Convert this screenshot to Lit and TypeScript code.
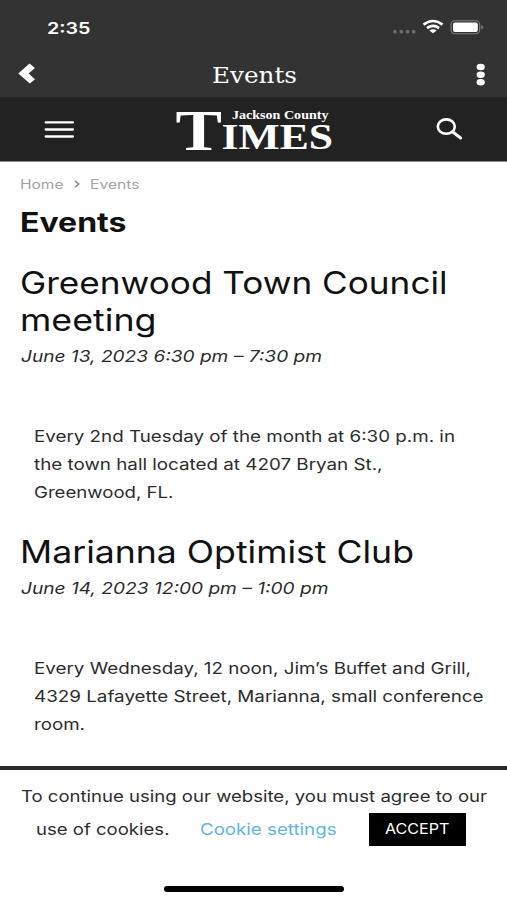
import { LitElement, html, css, svg } from "lit";
import { customElement } from "lit/decorators.js";

/** One line of wide-set text: `width` is its advance, `base` its baseline inside `height`. */
const line = (cls: string, text: string, width: number, height: number, base: number) => html`
  <svg class="line" width=${width} height=${height}>
    ${svg`<text class=${cls} x="0" y=${base} textLength=${width} lengthAdjust="spacingAndGlyphs">${text}</text>`}
  </svg>`;

type Line = [string, number];
interface EventItem {
  title: Line[];
  date: Line;
  body: Line[];
}

const events: EventItem[] = [
  {
    title: [["Greenwood Town Council", 427.5], ["meeting", 136.5]],
    date: ["June 13, 2023 6:30 pm – 7:30 pm", 301],
    body: [
      ["Every 2nd Tuesday of the month at 6:30 p.m. in", 421],
      ["the town hall located at 4207 Bryan St.,", 348.5],
      ["Greenwood, FL.", 139.5],
    ],
  },
  {
    title: [["Marianna Optimist Club", 394]],
    date: ["June 14, 2023 12:00 pm – 1:00 pm", 307.5],
    body: [
      ["Every Wednesday, 12 noon, Jim’s Buffet and Grill,", 437],
      ["4329 Lafayette Street, Marianna, small conference", 449.5],
      ["room.", 51],
    ],
  },
];

@customElement("app-root")
export class AppRoot extends LitElement {
  static styles = css`
    :host {
      display: flex;
      flex-direction: column;
      height: 900px;
      background: #fff;
      overflow: hidden;
      font-family: Inter, "Liberation Sans", sans-serif;
    }
    svg { display: block; overflow: visible; flex: none; }
    text { font-family: Inter, "Liberation Sans", sans-serif; fill: #2c2c2c; }
    .status {
      height: 54px;
      background: #333;
      display: flex;
      justify-content: space-between;
      padding: 0 23px 0 46.5px;
      box-sizing: border-box;
    }
    .time { font-size: 16px; font-weight: 600; fill: #fff; }
    .title {
      height: 43px;
      background: #333;
      display: flex;
      justify-content: space-between;
      padding: 0 21px 0 18px;
      box-sizing: border-box;
    }
    .screen { font-family: "DejaVu Serif", serif; font-size: 22.5px; fill: #fff; }
    .name { margin-left: -4px; }
    .nav {
      height: 64px;
      background: #222;
      border-bottom: 1px solid #8a8a8a;
      display: flex;
      justify-content: space-between;
      padding: 0 44px;
    }
    .logo text { font-family: "Liberation Serif", serif; font-weight: 700; fill: #fff; }
    .logo .big { font-size: 56px; }
    .logo .mid { font-size: 36px; }
    .logo .small { font-size: 12.5px; }
    .content { flex: 1; padding-left: 20px; }
    .crumbs { display: flex; height: 38px; }
    .crumb { font-size: 12.8px; fill: #a2a2a2; }
    .page { font-size: 26.5px; font-weight: 700; fill: #111; }
    .head { font-size: 30.5px; fill: #111; }
    .date { font-size: 16px; font-style: italic; }
    .body { font-size: 16px; }
    .events { padding-top: 20px; }
    .when { padding-left: 0.7px; }
    .text { padding: 55.5px 0 0 13.5px; }
    .event + .event { padding-top: 29.5px; }
    .cookies {
      height: 130px;
      border-top: 4px solid #2a2a2a;
      display: flex;
      flex-direction: column;
    }
    .notice { padding: 12px 0 0 21px; }
    .choices { display: flex; padding: 3px 0 0 35.5px; }
    .link { font-size: 16px; fill: #61b4e4; }
    .settings { margin-left: 30.5px; }
    .accept {
      margin: 0 0 0 32.5px;
      padding: 0 0 0 16px;
      width: 97px;
      height: 33px;
      border: 0;
      background: #000;
      box-sizing: border-box;
    }
    .btn { font-size: 14.3px; fill: #fff; }
    .home {
      width: 180px;
      height: 5.5px;
      border-radius: 3px;
      background: #000;
      margin: 40px 0 0 164px;
    }
  `;

  render() {
    return html`
      <div class="status">
        ${line("time", "2:35", 43.5, 54, 33.5)}
        <svg width="92" height="54" viewBox="392 0 92 54">
          <g fill="#6c6c6c">
            <circle cx="395" cy="31.7" r="1.9" /><circle cx="401.3" cy="31.7" r="1.9" />
            <circle cx="407.5" cy="31.7" r="1.9" /><circle cx="413.7" cy="31.7" r="1.9" />
          </g>
          <g fill="none" stroke="#fff" stroke-width="2.6">
            <path d="M423.5 24.6Q433 17.4 442.5 24.6" />
            <path d="M427 28.1Q433 23.8 439 28.1" />
          </g>
          <path d="M429.3 30.5Q433 28.2 436.7 30.5L433 33.3Z" fill="#fff" />
          <rect x="451" y="20.7" width="28.7" height="13" rx="4" fill="none" stroke="#808080" stroke-width="1.1" />
          <rect x="453" y="22.4" width="24.8" height="9.6" rx="2" fill="#fff" />
          <path d="M481.3 25Q483.2 25.7 483.2 27.2Q483.2 28.7 481.3 29.4Z" fill="#808080" />
        </svg>
      </div>
      <div class="title">
        <svg width="18" height="43" viewBox="18 54 18 43">
          <path d="M18.3 73.6L29.5 63.6L35 68L28.6 73.6L35 79.2L29.8 83.6Z" fill="#fff" />
        </svg>
        <div class="name">${line("screen", "Events", 85, 43, 29)}</div>
        <svg width="10" height="43" viewBox="476 54 10 43" fill="#fff">
          <ellipse cx="480.7" cy="67" rx="4.1" ry="3.3" />
          <ellipse cx="480.7" cy="74.7" rx="4.1" ry="3.3" />
          <ellipse cx="480.7" cy="82.3" rx="4.1" ry="3.3" />
        </svg>
      </div>
      <div class="nav">
        <svg width="30" height="64" viewBox="44 97 30 64" stroke="#fff" stroke-width="2.3" stroke-linecap="round">
          <path d="M45.7 122.4H72.9M45.7 129.5H72.9M45.7 136.5H72.9" />
        </svg>
        <svg class="logo" width="156" height="64" viewBox="176 97 156 64">
          <text class="big" x="174.5" y="149.5" textLength="46.5" lengthAdjust="spacingAndGlyphs">T</text>
          <text class="mid" x="220.5" y="149.2" textLength="111.5" lengthAdjust="spacingAndGlyphs">IMES</text>
          <text class="small" x="231" y="119" textLength="96.5" lengthAdjust="spacingAndGlyphs">Jackson County</text>
        </svg>
        <svg width="27" height="64" viewBox="436 97 27 64" fill="none" stroke="#fff">
          <ellipse cx="446.3" cy="126.6" rx="8.5" ry="7.2" stroke-width="2.6" />
          <path d="M452.5 131.8L460.6 138" stroke-width="3" stroke-linecap="round" />
        </svg>
      </div>
      <div class="content">
        <div class="crumbs">
          ${line("crumb", "Home", 43.5, 38, 26.7)}
          <svg width="26" height="38" viewBox="63.5 162 26 38">
            <path d="M74.6 181L78.3 184.1L74.6 187.2" fill="none" stroke="#8a8a8a" stroke-width="1.5" />
          </svg>
          ${line("crumb", "Events", 49.5, 38, 26.7)}
        </div>
        ${line("page", "Events", 106.5, 46, 32.3)}
        <div class="events">
          ${events.map(
            (e) => html`<div class="event">
              ${e.title.map(([t, w]) => line("head", t, w, 36.8, 28))}
              <div class="when">${line("date", e.date[0], e.date[1], 27, 22)}</div>
              <div class="text">${e.body.map(([t, w]) => line("body", t, w, 27.8, 19.5))}</div>
            </div>`
          )}
        </div>
      </div>
      <div class="cookies">
        <div class="notice">${line("body", "To continue using our website, you must agree to our", 466, 28, 20)}</div>
        <div class="choices">
          ${line("body", "use of cookies.", 133.5, 33, 22)}
          <div class="settings">${line("link", "Cookie settings", 136.5, 33, 22)}</div>
          <button class="accept">${line("btn", "ACCEPT", 64.5, 33, 21.2)}</button>
        </div>
        <div class="home"></div>
      </div>
    `;
  }
}
